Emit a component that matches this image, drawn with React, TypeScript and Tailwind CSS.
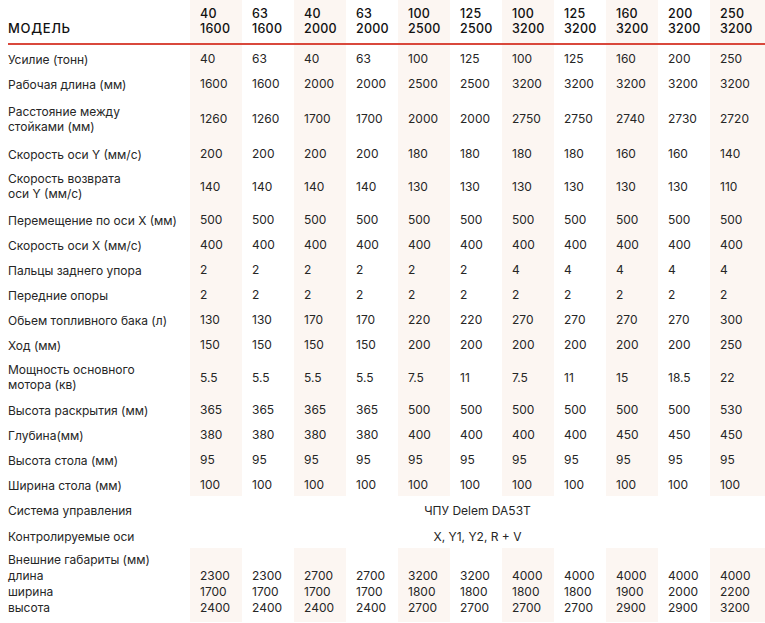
const models: [string, string][] = [
  ["40", "1600"],
  ["63", "1600"],
  ["40", "2000"],
  ["63", "2000"],
  ["100", "2500"],
  ["125", "2500"],
  ["100", "3200"],
  ["125", "3200"],
  ["160", "3200"],
  ["200", "3200"],
  ["250", "3200"],
];

const same = (v: string) => Array(11).fill(v) as string[];

type Row = { label: string[]; values: string[]; pad?: string };

const rows: Row[] = [
  { label: ["Усилие (тонн)"], values: ["40", "63", "40", "63", "100", "125", "100", "125", "160", "200", "250"] },
  { label: ["Рабочая длина (мм)"], values: ["1600", "1600", "2000", "2000", "2500", "2500", "3200", "3200", "3200", "3200", "3200"] },
  {
    label: ["Расстояние между", "стойками (мм)"],
    values: ["1260", "1260", "1700", "1700", "2000", "2000", "2750", "2750", "2740", "2730", "2720"],
    pad: "pt-[9px] pb-[6px]",
  },
  { label: ["Скорость оси Y (мм/с)"], values: ["200", "200", "200", "200", "180", "180", "180", "180", "160", "160", "140"] },
  {
    label: ["Скорость возврата", "оси Y (мм/с)"],
    values: ["140", "140", "140", "140", "130", "130", "130", "130", "130", "130", "110"],
    pad: "pt-[6px] pb-[5px]",
  },
  { label: ["Перемещение по оси X (мм)"], values: same("500") },
  { label: ["Скорость оси X (мм/с)"], values: same("400") },
  { label: ["Пальцы заднего упора"], values: ["2", "2", "2", "2", "2", "2", "4", "4", "4", "4", "4"] },
  { label: ["Передние опоры"], values: same("2") },
  { label: ["Обьем топливного бака (л)"], values: ["130", "130", "170", "170", "220", "220", "270", "270", "270", "270", "300"] },
  { label: ["Ход (мм)"], values: ["150", "150", "150", "150", "200", "200", "200", "200", "200", "200", "250"] },
  {
    label: ["Мощность основного", "мотора (кв)"],
    values: ["5.5", "5.5", "5.5", "5.5", "7.5", "11", "7.5", "11", "15", "18.5", "22"],
    pad: "pt-[6px] pb-[4px]",
  },
  { label: ["Высота раскрытия (мм)"], values: ["365", "365", "365", "365", "500", "500", "500", "500", "500", "500", "530"] },
  { label: ["Глубина(мм)"], values: ["380", "380", "380", "380", "400", "400", "400", "400", "450", "450", "450"] },
  { label: ["Высота стола (мм)"], values: same("95") },
  { label: ["Ширина стола (мм)"], values: same("100") },
];

const spans = [
  { label: "Система управления", value: "ЧПУ Delem DA53T" },
  { label: "Контролируемые оси", value: "X, Y1, Y2, R + V" },
];

const dims = {
  length: ["2300", "2300", "2700", "2700", "3200", "3200", "4000", "4000", "4000", "4000", "4000"],
  width: ["1700", "1700", "1700", "1700", "1800", "1800", "1800", "1800", "1900", "2000", "2200"],
  height: ["2400", "2400", "2400", "2400", "2700", "2700", "2700", "2700", "2900", "2900", "3200"],
};

const shade = (i: number) => (i % 2 === 0 ? "bg-[#fcf6f2]" : "");

export default function App() {
  return (
    <div className="bg-white pl-2 text-[#262626] font-['Inter','Liberation_Sans',sans-serif]">
      <table className="w-full table-fixed border-collapse text-[12px] leading-[15px]">
        <colgroup>
          <col className="w-[182px]" />
          {models.slice(0, 10).map((_, i) => (
            <col key={i} className="w-[52px]" />
          ))}
          <col />
        </colgroup>
        <thead>
          <tr className="border-b-2 border-[#d9483c]">
            <th className="pt-[6px] pb-[7px] text-left align-bottom text-[13px] font-medium tracking-[0.05em] text-[#111]">
              МОДЕЛЬ
            </th>
            {models.map(([a, b], i) => (
              <th
                key={i}
                className={`pt-[6px] pb-[7px] pl-[10px] text-left align-bottom text-[12.5px] font-medium tracking-[0.02em] text-[#111] ${shade(i)}`}
              >
                <div>{a}</div>
                <div>{b}</div>
              </th>
            ))}
          </tr>
        </thead>
        <tbody>
          <tr className="h-[1px]">
            <td colSpan={12} className="p-0" />
          </tr>
          {rows.map((r, ri) => (
            <tr key={ri}>
              <td className={`${r.pad ?? "pt-[7px] pb-[3px]"} align-middle`}>
                {r.label.map((l) => (
                  <div key={l}>{l}</div>
                ))}
              </td>
              {r.values.map((v, i) => (
                <td key={i} className={`pl-[10px] pt-[2px] align-middle ${shade(i)}`}>
                  {v}
                </td>
              ))}
            </tr>
          ))}
          {spans.map((s) => (
            <tr key={s.label} className="h-[26px]">
              <td className="pt-[3px] align-middle">{s.label}</td>
              <td colSpan={11} className="pt-[3px] text-center align-middle">
                {s.value}
              </td>
            </tr>
          ))}
          <tr className="leading-4">
            <td className="pt-[4px] pb-[6px] align-top">
              <div>Внешние габариты (мм)</div>
              <div>длина</div>
              <div>ширина</div>
              <div>высота</div>
            </td>
            {models.map((_, i) => (
              <td key={i} className={`pt-[4px] pb-[6px] pl-[10px] align-top ${shade(i)}`}>
                <div>&nbsp;</div>
                <div>{dims.length[i]}</div>
                <div>{dims.width[i]}</div>
                <div>{dims.height[i]}</div>
              </td>
            ))}
          </tr>
        </tbody>
      </table>
    </div>
  );
}
